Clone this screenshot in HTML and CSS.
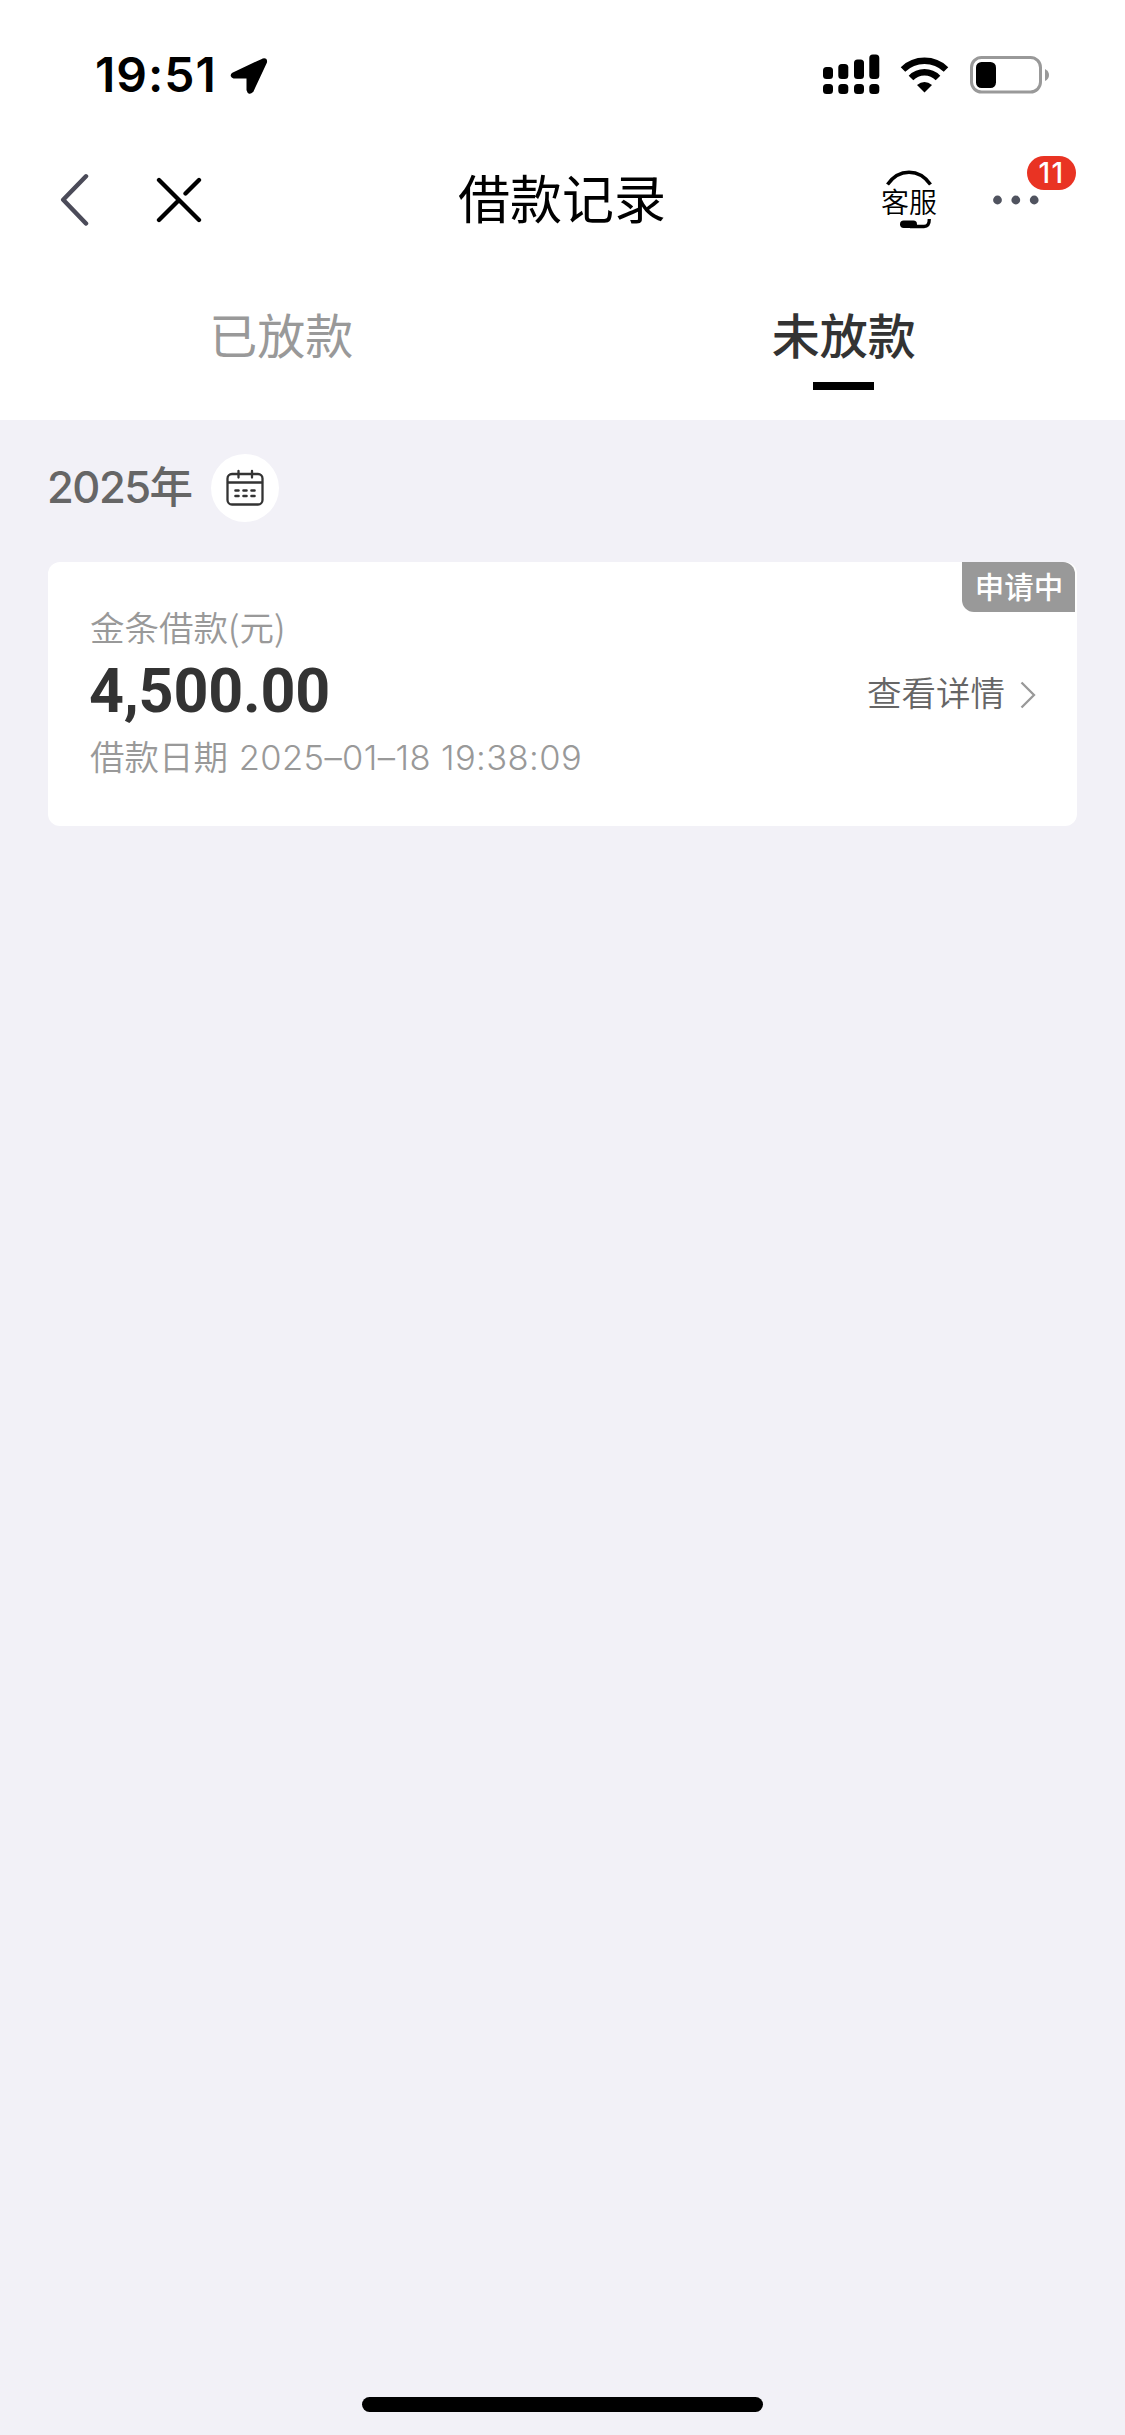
FILE: index.html
```html
<!DOCTYPE html>
<html lang="zh-CN">
<head>
<meta charset="utf-8">
<title>借款记录</title>
<link rel="stylesheet" href="styles.css">
</head>
<body>
<div class="screen">
  <header class="top">
    <div class="status">
      <span class="time">19:51</span>
      <svg class="location" width="38" height="38" viewBox="0 0 38 38"><path d="M3 17 L33 3 Q36 2 35.500 5 L22 34 Q19 37 18 33 V20 H4 Q1 19 3 17Z" fill="#000" stroke="#000" stroke-width="3" stroke-linejoin="round"/></svg>
      <svg class="signal" width="57" height="41" viewBox="0 0 57 41">
        <rect x="0" y="13" width="10" height="12" rx="3.5"/><rect x="15.3" y="10" width="10" height="15" rx="3.5"/><rect x="31" y="5.5" width="10" height="19.5" rx="3.5"/><rect x="46.3" y="0.5" width="10" height="24.5" rx="3.5"/>
        <rect x="0" y="30" width="10" height="10" rx="3.5"/><rect x="15.3" y="30" width="10" height="10" rx="3.5"/><rect x="31" y="30" width="10" height="10" rx="3.5"/><rect x="46.3" y="30" width="10" height="10" rx="3.5"/>
      </svg>
      <svg class="wifi" width="49" height="36" viewBox="0 0 49 36">
        <path d="M3 12.5 A31 31 0 0 1 46 12.5" fill="none" stroke="#000" stroke-width="6.5"/>
        <path d="M11 21 A19 19 0 0 1 38 21" fill="none" stroke="#000" stroke-width="6.5"/>
        <path d="M17 28 Q24.500 22 32 28 L24.500 35.500Z"/>
      </svg>
      <svg class="battery" width="80" height="38" viewBox="0 0 80 38">
        <rect x="1.500" y="1.500" width="69" height="34.500" rx="10" fill="none" stroke="#999" stroke-width="3"/>
        <rect x="6" y="6" width="20" height="26" rx="5.500"/>
        <path d="M75 13 Q79 15 79 19 Q79 23 75 25Z" fill="#999"/>
      </svg>
    </div>
    <nav class="nav">
      <svg class="back" width="30" height="54" viewBox="0 0 30 54"><path d="M27 3.300 L4.200 26.800 L27 50.500" fill="none" stroke="#4b4b59" stroke-width="4.500" stroke-linecap="round" stroke-linejoin="round"/></svg>
      <svg class="close" width="46" height="46" viewBox="0 0 46 46"><path d="M3 3 L43 43 M3 43 L22 24 M29.500 16.500 L43 3" fill="none" stroke="#000" stroke-width="4.300" stroke-linecap="round"/></svg>
      <h1 class="title">借款记录</h1>
      <div class="service">
        <svg width="46" height="16" viewBox="0 0 46 16"><path d="M1.500 14.500 Q10 2.200 23 2.200 Q36 2.200 44.500 14.500" fill="none" stroke="#000" stroke-width="3.500"/></svg>
        <span>客服</span>
        <svg class="mic" width="32" height="10" viewBox="0 0 32 10"><rect x="0" y="1.500" width="17" height="7.500" rx="3.700"/><path d="M10 7.500 H24 Q29.300 7.500 29.300 0" fill="none" stroke="#000" stroke-width="3.300"/></svg>
      </div>
      <div class="more">
        <svg width="46" height="10" viewBox="0 0 46 10" fill="#50535f"><circle cx="4.500" cy="5" r="4.400"/><circle cx="22.800" cy="5" r="4.400"/><circle cx="41.200" cy="5" r="4.400"/></svg>
        <span class="badge">11</span>
      </div>
    </nav>
    <div class="tabs">
      <div class="tab">已放款</div>
      <div class="tab active">未放款</div>
    </div>
  </header>
  <main class="content">
    <div class="period">
      <span class="year">2025<b>年</b></span>
      <span class="calendar">
        <svg width="38" height="38" viewBox="0 0 38 38" fill="none" stroke="#333" stroke-width="2.300" stroke-linecap="round"><rect x="1.500" y="5" width="35" height="30.500" rx="4.500"/><path d="M2 13.500 H36 M12.500 2 V8.500 M26 2 V8.500"/><path d="M9.500 21.500h3 M17.500 21.500h3 M25.500 21.500h3 M9.500 27h3 M17.500 27h3 M25.500 27h3" stroke-width="2.600"/></svg>
      </span>
    </div>
    <section class="card">
      <div class="loan">
        <div class="name">金条借款(元)</div>
        <div class="amount">4,500.00</div>
        <div class="date">借款日期 <span>2025–01–18 19:38:09</span></div>
      </div>
      <div class="details">
        <span>查看详情</span>
        <svg width="16" height="28" viewBox="0 0 16 28"><path d="M1.500 1.500 L14 14 L1.500 26.500" fill="none" stroke="#999" stroke-width="2.300"/></svg>
      </div>
      <span class="tag">申请中</span>
    </section>
  </main>
  <div class="home"></div>
</div>
</body>
</html>
```
FILE: styles.css
```css
* { box-sizing: border-box; }
body { margin: 0; font-family: "Noto Sans CJK SC", sans-serif; }
svg { display: block; flex: none; }
.screen { width: 1125px; height: 2435px; background: #f2f1f7; display: flex; flex-direction: column; }
.top { height: 420px; background: #fff; display: flex; flex-direction: column; }
.status { height: 140px; padding: 9px 0 0 95px; display: flex; align-items: center; }
.time { width: 135px; font: 600 48px/60px Inter, sans-serif; letter-spacing: 1px; white-space: nowrap; }
.location { margin-top: 2px; }
.signal { margin-left: 555px; }
.wifi { margin-left: 20px; }
.battery { margin-left: 21px; }
.nav { height: 119px; display: flex; align-items: center; padding-left: 59px; }
.close { margin-left: 67px; }
.title { width: 208px; margin: 0 0 0 256px; padding-bottom: 6px; font-size: 52px; line-height: 70px; font-weight: 400; white-space: nowrap; color: #000; }
.service { width: 60px; margin: 0 0 1px 213px; display: flex; flex-direction: column; align-items: center; }
.service span { font-size: 28px; line-height: 30px; font-weight: 350; color: #000; }
.mic { margin: 3px 0 0 14px; }
.more { position: relative; margin-left: 54px; }
.badge { position: absolute; left: 34px; top: -39px; width: 49px; height: 34px; border-radius: 17px; background: #e93323; color: #fff; font: 500 28px/35px Inter, sans-serif; letter-spacing: 1.5px; text-align: center; }
.tabs { display: flex; padding-top: 41px; }
.tab { flex: 1; display: flex; flex-direction: column; align-items: center; gap: 16px; font-size: 48px; line-height: 66px; color: #999; }
.active { color: #333; font-weight: 500; }
.active::after { content: ""; width: 61px; height: 8px; background: #000; }
.content { flex: 1; padding: 34px 48px 0; }
.period { display: flex; align-items: center; margin-bottom: 40px; }
.year { width: 164px; margin-left: -1px; padding-bottom: 3px; font: 500 43.5px/60px Inter, "Noto Sans CJK SC", sans-serif; color: #666; letter-spacing: -1.5px; white-space: nowrap; }
.year b { font-weight: 500; }
.calendar { width: 68px; height: 68px; border-radius: 50%; background: #fff; display: flex; align-items: center; justify-content: center; }
.card { position: relative; width: 1029px; height: 264px; padding: 40px 41px 0 42px; border-radius: 12px; background: #fff; display: flex; justify-content: space-between; }
.name { font-size: 34.5px; line-height: 48px; color: #999; }
.amount { font: 700 61px/83px Roboto, sans-serif; color: #333; letter-spacing: -0.2px; margin-left: -1px; }
.date { font: 400 34.5px/49px Inter, "Noto Sans CJK SC", sans-serif; color: #999; white-space: nowrap; }
.date span { margin-left: 1px; letter-spacing: 0.4px; }
.name, .date, .details span { font-weight: 350; }
.details { height: 178px; display: flex; align-items: center; gap: 15px; font-size: 34.5px; line-height: 48px; color: #666; }
.details svg { margin-top: 7px; }
.tag { position: absolute; right: 2px; top: 0; width: 113px; height: 50px; padding-left: 1px; border-radius: 0 12px 0 12px; background: #999; color: #fff; font-size: 29.5px; line-height: 46px; font-weight: 500; text-align: center; }
.home { width: 401px; height: 15px; border-radius: 8px; background: #000; margin: 0 0 23px 362px; }
```
